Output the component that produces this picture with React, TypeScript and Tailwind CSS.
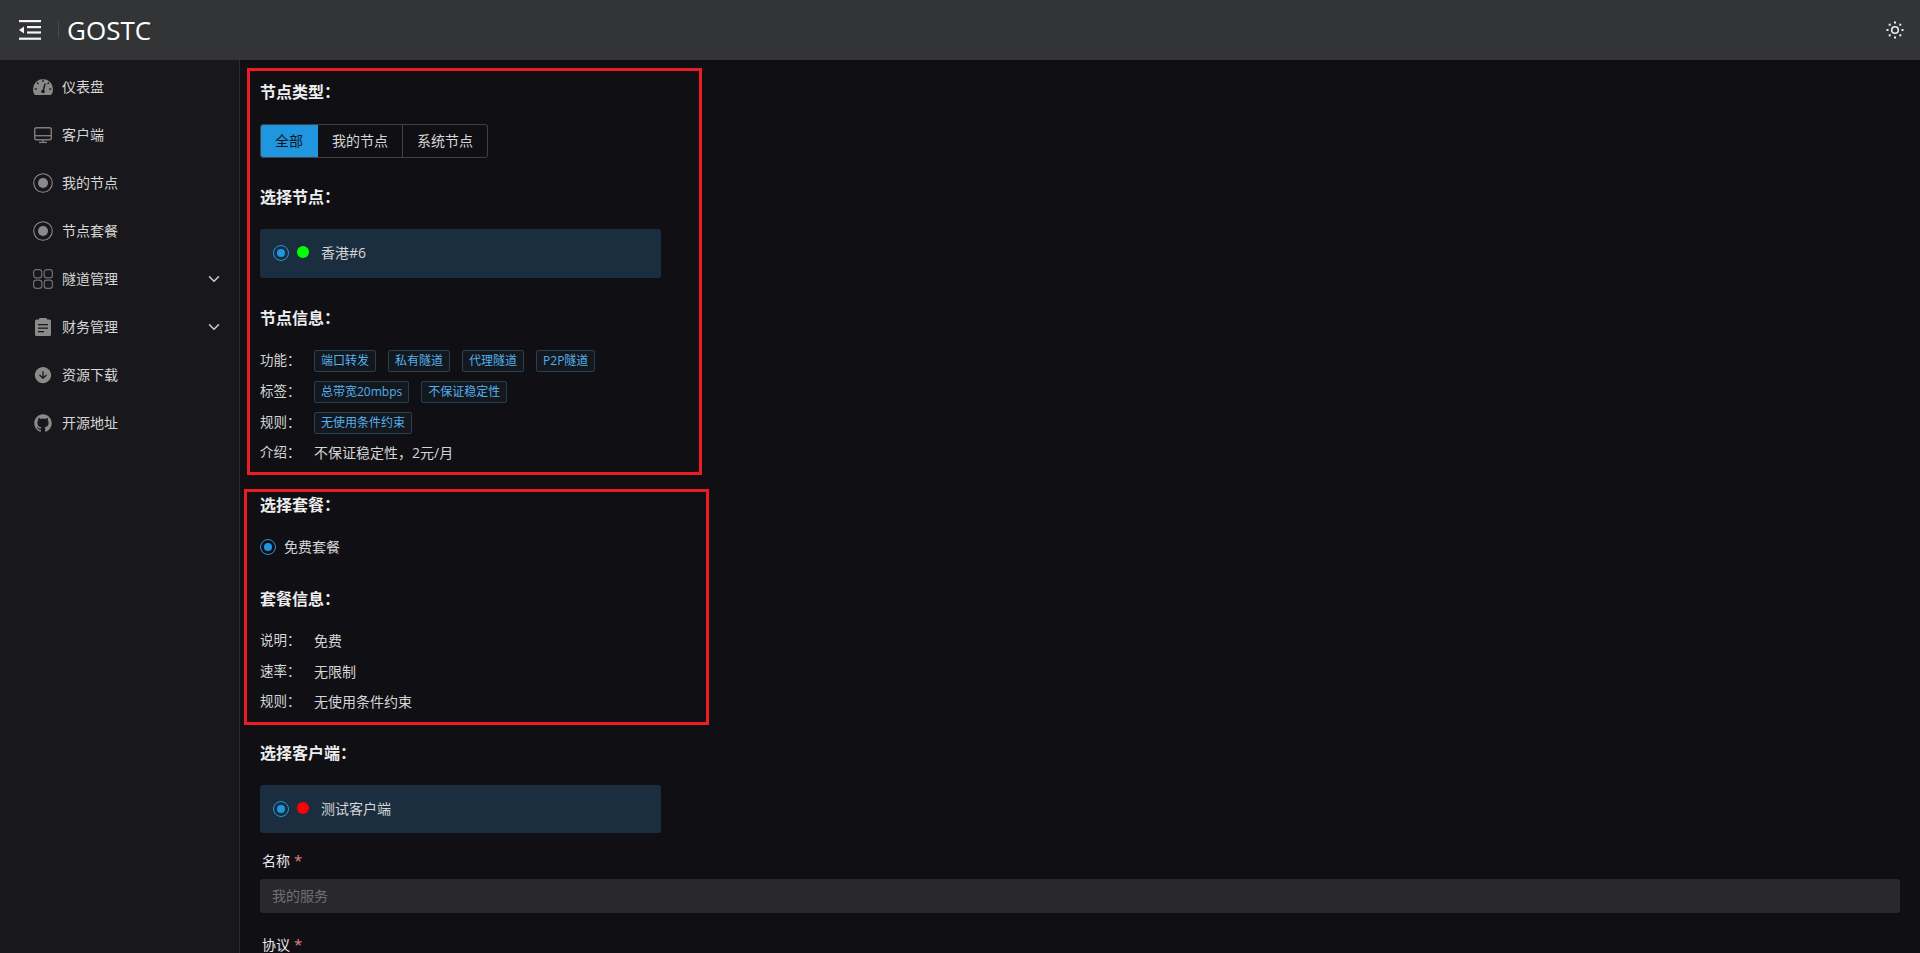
import React from "react";
import { IoArrowDownCircle, IoLogoGithub, IoChevronDown } from "react-icons/io5";

const FONT = '"Open Sans", "Noto Sans CJK SC", "Liberation Sans", sans-serif';

function RingIcon() {
  return (
    <svg width="20" height="20" viewBox="0 0 20 20">
      <circle cx="10" cy="10" r="9.3" fill="none" stroke="#8a8a8a" strokeWidth="1.1" />
      <circle cx="10" cy="10" r="5" fill="#8a8a8a" />
    </svg>
  );
}

function GaugeIcon() {
  return (
    <svg width="20" height="20" viewBox="0 0 20 20">
      <path d="M2 18 C0.7 16.5 0 14.5 0 12 A10 10 0 0 1 20 12 C20 14.5 19.3 16.5 18 18 Z" fill="#8a8a8a" />
      <g stroke="#18181c" strokeWidth="1.2">
        <path d="M10 2.5V5" />
        <path d="M4 5.5L5.5 7.2" />
        <path d="M16 5.5L14.5 7.2" />
        <path d="M1.5 12H4" />
        <path d="M18.5 12H16" />
        <path d="M10 14.5L12.2 6.5" strokeWidth="1.4" />
      </g>
      <circle cx="10" cy="14.5" r="1.8" fill="#18181c" />
    </svg>
  );
}

function DesktopIcon() {
  return (
    <svg width="20" height="20" viewBox="0 0 20 20" fill="none" stroke="#7d7d7d" strokeWidth="1.4">
      <rect x="1.7" y="2.7" width="16.6" height="12" rx="1.8" />
      <path d="M1.7 10.7H18.3" />
      <path d="M10 14.7V17.3" />
      <path d="M6 17.4H14" />
    </svg>
  );
}

function GridIcon() {
  return (
    <svg width="20" height="20" viewBox="0 0 20 20" fill="none" stroke="#6f6f6f" strokeWidth="1.2">
      <rect x="0.6" y="0.6" width="8.2" height="8.2" rx="2.6" />
      <rect x="11.2" y="0.6" width="8.2" height="8.2" rx="2.6" />
      <rect x="0.6" y="11.2" width="8.2" height="8.2" rx="2.6" />
      <rect x="11.2" y="11.2" width="8.2" height="8.2" rx="2.6" />
    </svg>
  );
}

function ClipboardIcon() {
  return (
    <svg width="20" height="20" viewBox="0 0 20 20">
      <rect x="2" y="2.5" width="16" height="16.5" rx="1.5" fill="#8a8a8a" />
      <rect x="6" y="1" width="8" height="3" rx="1" fill="#8a8a8a" />
      <rect x="5" y="7" width="10" height="1.3" fill="#18181c" />
      <rect x="5" y="10.5" width="10" height="1.3" fill="#18181c" />
      <rect x="5" y="14" width="6" height="1.3" fill="#18181c" />
    </svg>
  );
}

const menu = [
  { label: "仪表盘", icon: <GaugeIcon /> },
  { label: "客户端", icon: <DesktopIcon /> },
  { label: "我的节点", icon: <RingIcon /> },
  { label: "节点套餐", icon: <RingIcon /> },
  { label: "隧道管理", icon: <GridIcon />, arrow: true },
  { label: "财务管理", icon: <ClipboardIcon />, arrow: true },
  { label: "资源下载", icon: <IoArrowDownCircle size={20} /> },
  { label: "开源地址", icon: <IoLogoGithub size={20} /> },
];

function Heading({ children, className = "" }: { children: React.ReactNode; className?: string }) {
  return <h3 className={`h-6 text-base leading-6 font-bold text-[#eeeeee] ${className}`}>{children}</h3>;
}

function Radio() {
  return (
    <span className="flex h-4 w-4 shrink-0 items-center justify-center rounded-full border border-[#2196e0]">
      <span className="h-2 w-2 rounded-full bg-[#2196e0]" />
    </span>
  );
}

function Tag({ children }: { children: React.ReactNode }) {
  return (
    <span className="flex h-[22px] items-center rounded-[2px] border border-[#2a3f50] bg-[#13181e] px-[6px] text-xs text-[#55b0ec]">
      {children}
    </span>
  );
}

function Row({ label, children, className = "" }: { label: string; children: React.ReactNode; className?: string }) {
  return (
    <div className={`flex h-[22px] items-center text-sm text-[#d6d6d6] ${className}`}>
      <span className="w-[54px] shrink-0 text-[13.5px]">{label}：</span>
      {children}
    </div>
  );
}

function Choice({ color, label, className = "" }: { color: string; label: string; className?: string }) {
  return (
    <div className={`flex w-[401px] items-center rounded-[3px] bg-[#1b2e3f] pl-[13px] text-sm text-[#d6d6d6] ${className}`}>
      <Radio />
      <span className={`mb-[2px] ml-2 h-3 w-3 rounded-full ${color}`} />
      <span className="ml-3">{label}</span>
    </div>
  );
}

export default function App() {
  return (
    <div className="relative flex h-screen flex-col overflow-hidden bg-[#101014]" style={{ fontFamily: FONT }}>
      <header className="flex h-[60px] shrink-0 items-center bg-[#323436]">
        <svg className="ml-[19px] h-5 w-[22px]" viewBox="0 0 22 20" fill="#f4f4f4">
          <rect x="0" y="0" width="22" height="2.2" />
          <rect x="8" y="6" width="14" height="2.2" />
          <rect x="8" y="11.4" width="14" height="2.2" />
          <rect x="0" y="17.6" width="22" height="2.2" />
          <polygon points="0,10 5,6.5 5,13.5" />
        </svg>
        <span className="ml-[17px] h-4 w-px bg-[#46484a]" />
        <span className="ml-2 text-[26px] leading-none text-white">GOSTC</span>
        <svg className="mr-[16px] ml-auto h-[18px] w-[18px]" viewBox="0 0 18 18" fill="#eeeeee">
          <circle cx="9" cy="9" r="3.3" fill="none" stroke="#eeeeee" strokeWidth="1.6" />
          <rect x="8" y="0.5" width="2" height="2" />
          <rect x="8" y="15.5" width="2" height="2" />
          <rect x="0.5" y="8" width="2" height="2" />
          <rect x="15.5" y="8" width="2" height="2" />
          <rect x="2.7" y="2.7" width="2" height="2" />
          <rect x="13.3" y="2.7" width="2" height="2" />
          <rect x="2.7" y="13.3" width="2" height="2" />
          <rect x="13.3" y="13.3" width="2" height="2" />
        </svg>
      </header>

      <div className="flex min-h-0 flex-1">
        <aside className="w-[240px] shrink-0 border-r border-[#2c2c30] bg-[#18181c] pt-[3px]">
          {menu.map((m) => (
            <div key={m.label} className="flex h-12 items-center pl-8 text-sm text-[#d6d6d6]">
              <span className="flex w-[22px] shrink-0 items-center justify-center text-[#8a8a8a]">{m.icon}</span>
              <span className="ml-2">{m.label}</span>
              {m.arrow && <IoChevronDown size={16} className="mr-[17px] ml-auto text-[#cfcfcf]" />}
            </div>
          ))}
        </aside>

        <main className="min-w-0 flex-1 overflow-hidden px-5 pt-5">
          <Heading>节点类型：</Heading>
          <div className="mt-5 flex h-[34px] w-[228px] overflow-hidden rounded-[3px] border border-[#414144] text-sm text-[#d6d6d6]">
            <span className="-my-px -ml-px flex w-[58px] items-center justify-center bg-[#2196e0] text-[#0b1620]">全部</span>
            <span className="flex w-[85px] items-center justify-center border-r border-[#414144]">我的节点</span>
            <span className="flex flex-1 items-center justify-center">系统节点</span>
          </div>

          <Heading className="mt-[27px]">选择节点：</Heading>
          <Choice className="mt-5 h-[49px] pb-px" color="bg-[#00ff00]" label="香港#6" />

          <Heading className="mt-7">节点信息：</Heading>
          <Row label="功能" className="mt-5">
            <div className="flex gap-3"><Tag>端口转发</Tag><Tag>私有隧道</Tag><Tag>代理隧道</Tag><Tag>P2P隧道</Tag></div>
          </Row>
          <Row label="标签" className="mt-[9px]">
            <div className="flex gap-3"><Tag>总带宽20mbps</Tag><Tag>不保证稳定性</Tag></div>
          </Row>
          <Row label="规则" className="mt-[9px]">
            <Tag>无使用条件约束</Tag>
          </Row>
          <Row label="介绍" className="mt-2"><span>不保证稳定性，2元/月</span></Row>

          <Heading className="mt-[29px]">选择套餐：</Heading>
          <div className="mt-5 flex h-5 items-center text-sm text-[#d6d6d6]">
            <Radio />
            <span className="ml-2">免费套餐</span>
          </div>

          <Heading className="mt-[30px]">套餐信息：</Heading>
          <Row label="说明" className="mt-[19px]"><span>免费</span></Row>
          <Row label="速率" className="mt-[9px]"><span>无限制</span></Row>
          <Row label="规则" className="mt-2"><span>无使用条件约束</span></Row>

          <Heading className="mt-7">选择客户端：</Heading>
          <Choice className="mt-5 h-12" color="bg-[#ff0000]" label="测试客户端" />

          <div className="mt-[17px] flex h-[22px] items-center pl-[2px] text-sm text-[#e8e8e8]">名称<span className="ml-1 text-[15px] text-[#e88080]">*</span></div>
          <div className="mt-[7px] flex h-[34px] items-center rounded-[3px] bg-[#29292d] pl-3 text-sm text-[#6f6f72]">我的服务</div>
          <div className="mt-[21px] flex h-[22px] items-center pl-[2px] text-sm text-[#e8e8e8]">协议<span className="ml-1 text-[15px] text-[#e88080]">*</span></div>
        </main>
      </div>

      <div className="absolute top-[68px] left-[247px] h-[407px] w-[455px] border-[3px] border-[#ed1c24]" />
      <div className="absolute top-[489px] left-[244px] h-[236px] w-[465px] border-[3px] border-[#ed1c24]" />
    </div>
  );
}
